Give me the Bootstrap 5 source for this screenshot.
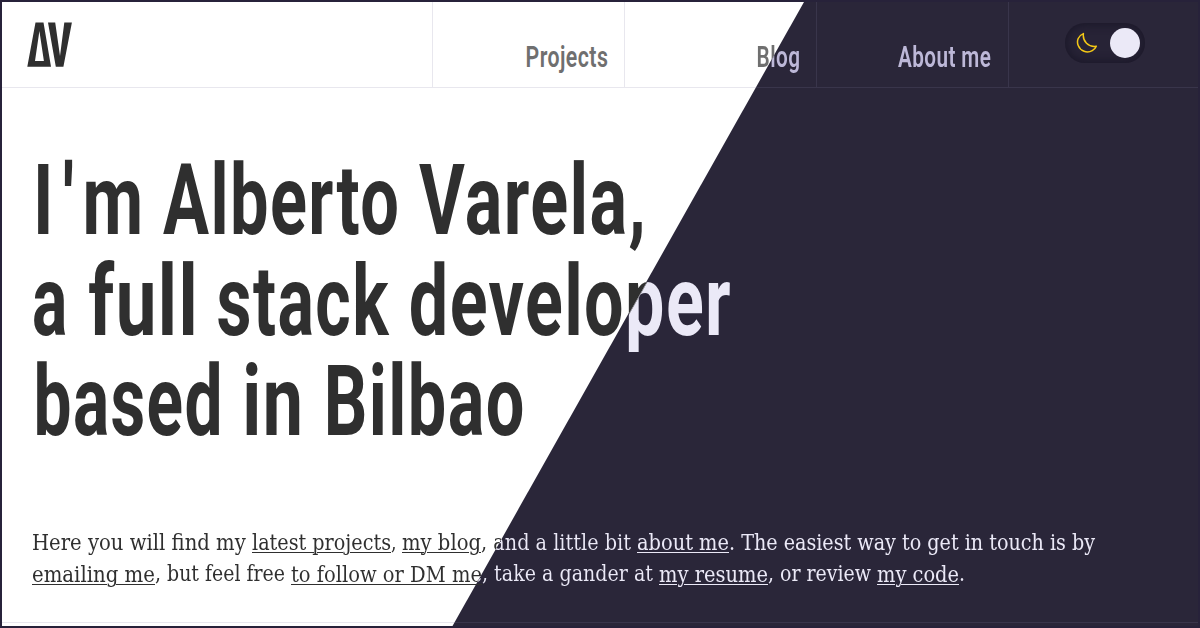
<!DOCTYPE html>
<html lang="en">
<head>
<meta charset="utf-8">
<meta name="viewport" content="width=device-width, initial-scale=1">
<title>Alberto Varela</title>
<link href="https://cdn.jsdelivr.net/npm/bootstrap@5.3.0/dist/css/bootstrap.min.css" rel="stylesheet">
<style>
:root{--line:rgba(130,122,158,.18)}
body{background:#27223a}
.page{height:628px;border:2px solid #27223a;background:#fff;color:#2f2f2f;isolation:isolate}
/* dark theme half, cut on the diagonal */
.page::before{content:"";position:absolute;inset:0;z-index:-1;background:#2a2639;clip-path:polygon(802px 0,100% 0,100% 100%,450.5px 100%)}
.topbar{height:86px;border-bottom:1px solid var(--line)}
.brand-cell{width:430px;padding:20px 0 0 25px}
.nav-cell{width:192px;padding:0 17px 11px 0;border-left:1px solid var(--line)}
.toggle-cell{width:188px;padding:21px 0 0 56px;border-left:1px solid var(--line)}
.fit{display:inline-block;white-space:pre;flex:none}
.fit>span,.fit>a{display:inline-block;transform-origin:0 50%;white-space:pre;color:inherit}
.nav-cell .fit{font:600 29.5px/38px Roboto,sans-serif;letter-spacing:.6px}
.is-light{color:#2f2f2f}.is-dark{color:#ebe9f7}
.nav-cell .is-light{color:#6f6f6f}.nav-cell .is-dark{color:#bdb8d8}
.switch{width:80px;height:40px;border-radius:20px;background:#272336;box-shadow:inset 0 0 8px 2px #1b1829;padding:5px 5px 5px 11px}
.knob{width:30px;height:30px;background:#ebe9f7}
.hero{padding:63px 0 0 30px}
.hero h1{margin:0;font:700 98.5px/100.6px Roboto,sans-serif;letter-spacing:2px}
.intro{padding:74px 0 0 30px;height:170px;border-bottom:1px solid var(--line)}
.intro p{margin:0;font:22px/31.5px "DejaVu Serif Condensed","DejaVu Serif",serif}
.intro p .fit{height:31.5px}
.intro a{text-decoration:underline 1px;text-underline-offset:2px}
.drop .fit:has(a){margin-top:1px}
</style>
</head>
<body>
<div class="page position-relative overflow-hidden">
  <header class="topbar d-flex">
    <div class="brand-cell">
      <svg class="d-block" width="46" height="46" viewBox="0 0 46 46" fill="#2f2f2f" aria-label="AV"><path fill-rule="evenodd" d="M8.5 .4h8L24 44.7H.3zM12.4 9 8 39h8.9z"/><path d="M21 .4h7.2L33 34 37.3.4h7.6l-8.5 44.3h-7.6z"/></svg>
    </div>
    <nav class="d-flex">
      <div class="nav-cell d-flex align-items-end justify-content-end"><div class="fit" data-ink="80"><span>Projects</span></div></div>
      <div class="nav-cell d-flex align-items-end justify-content-end"><div class="fit" data-ink="41.5"><span>Blog</span></div></div>
      <div class="nav-cell d-flex align-items-end justify-content-end"><div class="fit" data-ink="93"><span>About me</span></div></div>
    </nav>
    <div class="toggle-cell">
      <div class="switch d-flex align-items-center justify-content-between">
        <svg width="22" height="22" viewBox="0 0 22 22" fill="none" stroke="#f5c916" stroke-width="1.5" stroke-linejoin="round"><path d="M7.4 1.6C2.4 3.7.3 8.800 2.200 13.500C4.500 19.200 11 21.600 16.300 18.600C18.400 17.400 19.800 15.600 20.300 14.300C16.400 14.900 13.200 13.900 10.500 11.200C7.700 8.300 6.900 5.200 7.400 1.600z"/></svg>
        <div class="knob rounded-circle"></div>
      </div>
    </div>
  </header>
  <main>
    <div class="hero">
      <h1>
        <div class="d-flex"><div class="fit" data-gap="5.5" data-ink="101.5" style="letter-spacing:13px"><span>I'm</span></div><div class="fit" data-gap="24" data-ink="234"><span>Alberto</span></div><div class="fit" data-gap="22" data-ink="223"><span>Varela,</span></div></div>
        <div class="d-flex"><div class="fit" data-gap="2" data-ink="31.5"><span>a</span></div><div class="fit" data-gap="23.5" data-ink="105"><span>full</span></div><div class="fit" data-gap="24" data-ink="171.5"><span>stack</span></div><div class="fit" data-gap="21" data-ink="319"><span>developer</span></div></div>
        <div class="d-flex"><div class="fit" data-gap="4.5" data-ink="182.500"><span>based</span></div><div class="fit" data-gap="27" data-ink="54"><span>in</span></div><div class="fit" data-gap="27.5" data-ink="194.500"><span>Bilbao</span></div></div>
      </h1>
    </div>
    <div class="intro">
      <p class="d-flex"><span class="fit" data-w="220"><span>Here you will find my </span></span><span class="fit" data-w="139"><a href="#">latest projects</a></span><span class="fit" data-w="11"><span>, </span></span><span class="fit" data-w="79"><a href="#">my blog</a></span><span class="fit" data-w="156"><span>, and a little bit </span></span><span class="fit" data-w="92"><a href="#">about me</a></span><span class="fit" data-w="366"><span>. The easiest way to get in touch is by</span></span></p>
      <p class="d-flex drop"><span class="fit" data-w="123"><a href="#">emailing me</a></span><span class="fit" data-w="136"><span>, but feel free </span></span><span class="fit" data-w="191"><a href="#">to follow or DM me</a></span><span class="fit" data-w="177"><span>, take a gander at </span></span><span class="fit" data-w="109"><a href="#">my resume</a></span><span class="fit" data-w="109"><span>, or review </span></span><span class="fit" data-w="82"><a href="#">my code</a></span><span class="fit" data-w="6"><span>.</span></span></p>
    </div>
  </main>
</div>
<script src="https://cdn.jsdelivr.net/npm/bootstrap@5.3.0/dist/js/bootstrap.bundle.min.js"></script>
<script>
// Condense each run of text to its measure, then colour it for its side of the diagonal.
const ctx = document.createElement('canvas').getContext('2d');
const slope = 351.5 / 624, edgeX = y => 804 - (y - 2) * slope;
for (const box of document.querySelectorAll('.fit')) {
  const t = box.firstElementChild, cs = getComputedStyle(t);
  let w, s, shift = 0;
  if (box.dataset.ink) {
    ctx.font = cs.fontWeight + ' ' + cs.fontSize + ' ' + cs.fontFamily;
    const m = ctx.measureText(t.textContent);
    const advance = t.getBoundingClientRect().width - parseFloat(cs.letterSpacing);
    w = +box.dataset.ink;
    s = w / (advance - (m.width - m.actualBoundingBoxRight) + m.actualBoundingBoxLeft);
    shift = m.actualBoundingBoxLeft * s;
  } else {
    w = +box.dataset.w;
    s = w / t.getBoundingClientRect().width;
  }
  box.style.marginLeft = (box.dataset.gap || 0) + 'px';
  box.style.width = w + 'px';
  t.style.transform = `translateX(${shift}px) scaleX(${s})`;
}
for (const box of document.querySelectorAll('.fit')) {
  const t = box.firstElementChild, r = t.getBoundingClientRect();
  if (r.right < edgeX(r.bottom)) { box.classList.add('is-light'); continue; }
  if (r.left > edgeX(r.top)) { box.classList.add('is-dark'); continue; }
  const nav = box.closest('nav'), w = t.offsetWidth, h = r.height, s = r.width / w;
  const a = Math.PI / 2 + Math.atan(slope / s), gx = Math.sin(a), gy = -Math.cos(a);
  const px = (edgeX(r.top) - r.left) / s;
  const at = (px - w / 2) * gx + (-h / 2) * gy + (w * Math.abs(gx) + h * Math.abs(gy)) / 2;
  t.style.backgroundImage = `linear-gradient(${a}rad, ${nav ? '#6f6f6f' : '#2f2f2f'} ${at - .4}px, ${nav ? '#bdb8d8' : '#ebe9f7'} ${at + .4}px)`;
  t.style.backgroundClip = t.style.webkitBackgroundClip = 'text';
  t.style.webkitTextFillColor = 'transparent';
  if (t.tagName === 'A') t.style.textDecorationColor = '#2f2f2f';
}
</script>
</body>
</html>
